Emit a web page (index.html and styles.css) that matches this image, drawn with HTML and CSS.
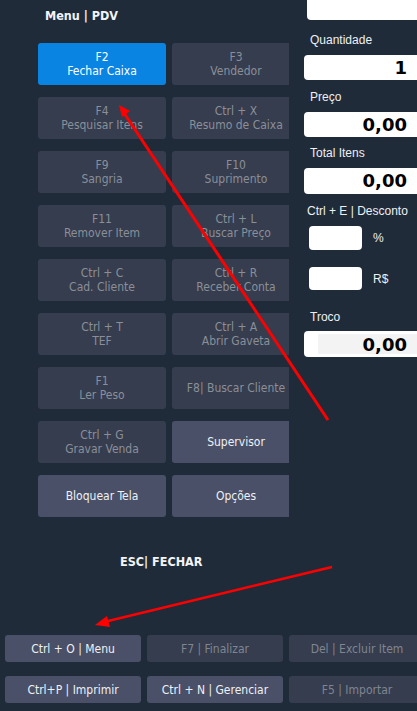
FILE: index.html
```html
<!DOCTYPE html>
<html lang="pt-BR">
<head>
<meta charset="utf-8">
<title>Menu | PDV</title>
<link rel="stylesheet" href="styles.css">
</head>
<body>
<div class="app">
  <div class="main">
    <div class="menu">
      <div class="menu-title">Menu | PDV</div>
      <div class="grid">
        <div class="btn active"><span>F2</span><span>Fechar Caixa</span></div>
        <div class="btn off"><span>F3</span><span>Vendedor</span></div>
        <div class="btn off"><span>F4</span><span>Pesquisar Itens</span></div>
        <div class="btn off"><span>Ctrl + X</span><span>Resumo de Caixa</span></div>
        <div class="btn off"><span>F9</span><span>Sangria</span></div>
        <div class="btn off"><span>F10</span><span>Suprimento</span></div>
        <div class="btn off"><span>F11</span><span>Remover Item</span></div>
        <div class="btn off"><span>Ctrl + L</span><span>Buscar Preço</span></div>
        <div class="btn off"><span>Ctrl + C</span><span>Cad. Cliente</span></div>
        <div class="btn off"><span>Ctrl + R</span><span>Receber Conta</span></div>
        <div class="btn off"><span>Ctrl + T</span><span>TEF</span></div>
        <div class="btn off"><span>Ctrl + A</span><span>Abrir Gaveta</span></div>
        <div class="btn off"><span>F1</span><span>Ler Peso</span></div>
        <div class="btn off"><span>F8| Buscar Cliente</span></div>
        <div class="btn off"><span>Ctrl + G</span><span>Gravar Venda</span></div>
        <div class="btn on"><span>Supervisor</span></div>
        <div class="btn on"><span>Bloquear Tela</span></div>
        <div class="btn on"><span>Opções</span></div>
      </div>
      <div class="esc">ESC| FECHAR</div>
    </div>
    <div class="side">
      <div class="field top-field"></div>
      <div class="label label-first">Quantidade</div>
      <div class="field value">1</div>
      <div class="label">Preço</div>
      <div class="field value">0,00</div>
      <div class="label label-total">Total Itens</div>
      <div class="field value tall">0,00</div>
      <div class="label label-desc">Ctrl + E | Desconto</div>
      <div class="disc-row"><div class="small-field"></div><span class="unit">%</span></div>
      <div class="disc-row disc-rs"><div class="small-field"></div><span class="unit">R$</span></div>
      <div class="label label-troco">Troco</div>
      <div class="field value tall troco"><span class="troco-inner">0,00</span></div>
    </div>
  </div>
  <div class="bar">
    <div class="bar-row">
      <div class="bbtn on">Ctrl + O | Menu</div>
      <div class="bbtn off">F7 | Finalizar</div>
      <div class="bbtn off">Del | Excluir Item</div>
    </div>
    <div class="bar-row">
      <div class="bbtn on">Ctrl+P | Imprimir</div>
      <div class="bbtn on">Ctrl + N | Gerenciar</div>
      <div class="bbtn off">F5 | Importar</div>
    </div>
  </div>
  <svg class="arrows" width="417" height="711" viewBox="0 0 417 711">
    <line x1="328" y1="420" x2="124" y2="113" stroke="#ff0000" stroke-width="3"/>
    <polygon points="119,105 130,111 122,117" fill="#ff0000"/>
    <line x1="332" y1="567" x2="104" y2="622" stroke="#ff0000" stroke-width="2.5"/>
    <polygon points="95,625 107,616 110,627" fill="#ff0000"/>
  </svg>
</div>
</body>
</html>
```
FILE: styles.css
```css
html, body {
  margin: 0;
  padding: 0;
  background: #202b39;
}

.app {
  position: relative;
  width: 417px;
  height: 711px;
  overflow: hidden;
  background: #202b39;
  font-family: "DejaVu Sans Condensed", "DejaVu Sans", sans-serif;
  font-stretch: condensed;
}

.main {
  display: flex;
  height: 635px;
}

.menu {
  width: 289px;
  flex-shrink: 0;
  overflow: hidden;
  box-sizing: border-box;
  padding-left: 38px;
}

.menu-title {
  padding-top: 9px;
  padding-left: 7px;
  line-height: 14px;
  font-size: 12.5px;
  font-weight: bold;
  color: #f2f4f8;
}

.grid {
  margin-top: 20px;
  width: 262px;
  display: grid;
  grid-template-columns: 128px 128px;
  grid-auto-rows: 42px;
  gap: 12px 6px;
}

.btn {
  border-radius: 3px;
  display: flex;
  flex-direction: column;
  justify-content: center;
  align-items: center;
  font-size: 12px;
  line-height: 14px;
  white-space: nowrap;
}

.btn.active {
  background: #0a84e2;
  color: #ffffff;
}

.btn.off {
  background: #353d4f;
  color: #8b8f98;
}

.btn.on {
  background: #4a5067;
  color: #eef0f5;
}

.esc {
  margin-top: 38px;
  margin-left: 82px;
  line-height: 14px;
  font-size: 12.5px;
  font-weight: bold;
  color: #f2f4f8;
}

.side {
  margin-left: 15px;
  flex: 1;
  overflow: hidden;
  font-family: "Liberation Sans", Arial, sans-serif;
  font-stretch: normal;
}

.field {
  background: #ffffff;
  border-radius: 4px;
  box-sizing: border-box;
}

.top-field {
  margin-left: 3px;
  width: 130px;
  height: 20px;
  border-radius: 0 0 4px 4px;
}

.label {
  margin-top: 10px;
  margin-left: 6px;
  font-size: 12px;
  line-height: 14px;
  color: #eef0f4;
}

.label-first {
  margin-top: 13px;
}

.label-total {
  margin-top: 9px;
}

.label-desc {
  margin-left: 3px;
}

.label-troco {
  margin-top: 20px;
}

.value {
  margin-top: 8px;
  width: 130px;
  height: 25px;
  padding-right: 27px;
  text-align: right;
  font-family: "DejaVu Sans", sans-serif;
  font-weight: bold;
  font-size: 18px;
  line-height: 25px;
  color: #000000;
}

.value.tall {
  height: 26px;
  line-height: 26px;
}

.troco {
  margin-top: 7px;
  padding: 3px 0 3px 14px;
}

.troco-inner {
  display: block;
  height: 20px;
  line-height: 21px;
  background: #f3f3f3;
  padding-right: 27px;
}

.disc-row {
  margin-top: 8px;
  margin-left: 5px;
  display: flex;
  align-items: center;
  gap: 11px;
}

.disc-rs {
  margin-top: 17px;
}

.disc-rs .small-field {
  height: 23px;
}

.small-field {
  width: 53px;
  height: 24px;
  background: #ffffff;
  border-radius: 4px;
}

.unit {
  font-size: 12px;
  color: #eef0f4;
}

.bar {
  padding-left: 5px;
  display: flex;
  flex-direction: column;
  gap: 14px;
}

.bar-row {
  display: flex;
  gap: 6px;
}

.bbtn {
  width: 136px;
  height: 27px;
  flex-shrink: 0;
  border-radius: 3px;
  display: flex;
  align-items: center;
  justify-content: center;
  font-size: 12px;
  white-space: nowrap;
}

.bbtn.on {
  background: #4a5067;
  color: #eef0f5;
}

.bbtn.off {
  background: #353d4f;
  color: #80858f;
}

.arrows {
  position: absolute;
  left: 0;
  top: 0;
  pointer-events: none;
}
```
